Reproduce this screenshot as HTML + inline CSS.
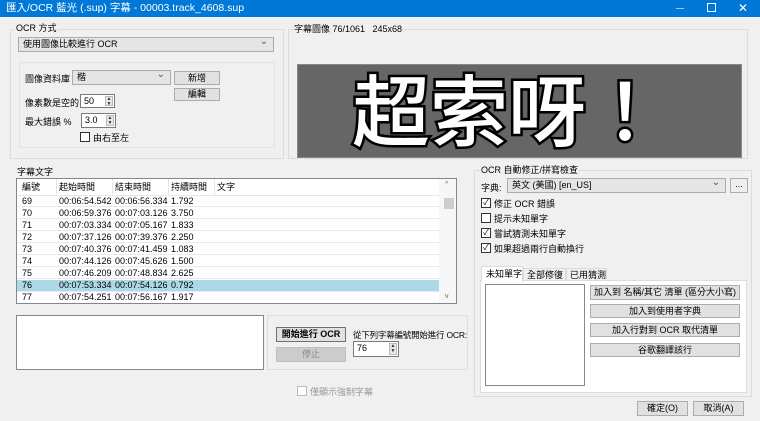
<!DOCTYPE html>
<html><head><meta charset="utf-8"><style>
*{box-sizing:border-box;margin:0;padding:0}
body{width:760px;height:421px;background:#f0f0f0;font-family:"Liberation Sans","Noto Sans CJK TC",sans-serif;font-size:9px;color:#000;position:relative;overflow:hidden}
.a{position:absolute;white-space:nowrap}
.gb{position:absolute;border:1px solid #dcdcdc}
.btn{position:absolute;background:#e1e1e1;border:1px solid #adadad;text-align:center;line-height:13px}
.cb{position:absolute;width:10px;height:10px;border:1px solid #333;background:#fff;font-size:8px;line-height:8px;text-align:center}
.combo{position:absolute;background:#e5e5e5;border:1px solid #acacac;padding-left:4px;line-height:13px}
.combo:after{content:"⌄";position:absolute;right:5px;top:-3px;color:#555;font-size:10px}
.spin{position:absolute;background:#fff;border:1px solid #7a7a7a;padding-left:3px;line-height:12px}
.spin i{position:absolute;right:1px;top:1px;width:8px;bottom:1px;background:#e8e8e8;border:1px solid #bbb;font-style:normal;font-size:5px;line-height:5px;text-align:center;color:#333}
.row{position:absolute;left:17px;width:423px;height:11px;border-bottom:1px solid #e6e9ef;line-height:11px}
.row span{position:absolute}
</style></head><body>
<div class="a" style="left:0;top:0;width:760px;height:17px;background:#0078d7;color:#fff;padding-left:6px;line-height:16px;font-size:10.5px">匯入/OCR 藍光 (.sup) 字幕 - 00003.track_4608.sup</div>
<div class="a" style="left:676px;top:8px;width:8px;height:1px;background:#9cc6ee"></div>
<div class="a" style="left:707px;top:3px;width:9px;height:9px;border:1px solid #fff"></div>
<div class="a" style="left:738px;top:0;color:#fff;font-size:12px;line-height:16px">✕</div>

<div class="gb" style="left:10px;top:29px;width:274px;height:130px"></div>
<div class="a" style="left:15px;top:21px;background:#f0f0f0;padding:0 1px">OCR 方式</div>
<div class="combo" style="left:18px;top:37px;width:256px;height:15px">使用圖像比較進行 OCR</div>
<div class="gb" style="left:19px;top:62px;width:256px;height:86px;border-color:#e2e2e2"></div>
<div class="a" style="left:25px;top:72px">圖像資料庫</div>
<div class="combo" style="left:72px;top:70px;width:99px;height:15px;background:#e5e5e5">楷</div>
<div class="btn" style="left:174px;top:71px;width:46px;height:14px">新增</div>
<div class="btn" style="left:174px;top:88px;width:46px;height:13px;line-height:11px">編輯</div>
<div class="a" style="left:25px;top:96px">像素數是空的</div>
<div class="spin" style="left:80px;top:94px;width:35px;height:14px">50<i>▲<br>▼</i></div>
<div class="a" style="left:25px;top:115px">最大錯誤 %</div>
<div class="spin" style="left:81px;top:113px;width:35px;height:15px">3.0<i>▲<br>▼</i></div>
<div class="cb" style="left:80px;top:132px"></div>
<div class="a" style="left:93px;top:131px">由右至左</div>

<div class="gb" style="left:288px;top:29px;width:460px;height:130px"></div>
<div class="a" style="left:293px;top:22px;background:#f0f0f0;padding:0 1px">字幕圖像 76/1061&nbsp;&nbsp;&nbsp;245x68</div>
<div class="a" style="left:297px;top:64px;width:445px;height:94px;background:#666;border:1px solid #888;overflow:hidden">
<div style="position:absolute;left:54px;top:-8px;font-size:78px;line-height:100px;color:#fff;font-family:'Noto Sans CJK TC',sans-serif;font-weight:500;-webkit-text-stroke:5px #000;paint-order:stroke fill;text-shadow:0 0 3px #000,0 0 3px #000">超索呀！</div></div>

<div class="a" style="left:17px;top:165px">字幕文字</div>
<div class="a" style="left:16px;top:178px;width:441px;height:126px;background:#fff;border:1px solid #828790"></div>
<div class="a" style="left:17px;top:179px;width:424px;height:17px;border-bottom:1px solid #e5e5e5;line-height:16px">
<span class="a" style="left:5px">編號</span><span class="a" style="left:42px">起始時間</span><span class="a" style="left:98px">結束時間</span><span class="a" style="left:154px">持續時間</span><span class="a" style="left:200px">文字</span>
<span class="a" style="left:39px;top:0;width:1px;height:17px;background:#e5e5e5"></span><span class="a" style="left:95px;top:0;width:1px;height:17px;background:#e5e5e5"></span><span class="a" style="left:151px;top:0;width:1px;height:17px;background:#e5e5e5"></span><span class="a" style="left:197px;top:0;width:1px;height:17px;background:#e5e5e5"></span></div>
<div class="row" style="top:196px"><span style="left:5px">69</span><span style="left:42px">00:06:54.542</span><span style="left:98px">00:06:56.334</span><span style="left:154px">1.792</span></div>
<div class="row" style="top:208px"><span style="left:5px">70</span><span style="left:42px">00:06:59.376</span><span style="left:98px">00:07:03.126</span><span style="left:154px">3.750</span></div>
<div class="row" style="top:220px"><span style="left:5px">71</span><span style="left:42px">00:07:03.334</span><span style="left:98px">00:07:05.167</span><span style="left:154px">1.833</span></div>
<div class="row" style="top:232px"><span style="left:5px">72</span><span style="left:42px">00:07:37.126</span><span style="left:98px">00:07:39.376</span><span style="left:154px">2.250</span></div>
<div class="row" style="top:244px"><span style="left:5px">73</span><span style="left:42px">00:07:40.376</span><span style="left:98px">00:07:41.459</span><span style="left:154px">1.083</span></div>
<div class="row" style="top:256px"><span style="left:5px">74</span><span style="left:42px">00:07:44.126</span><span style="left:98px">00:07:45.626</span><span style="left:154px">1.500</span></div>
<div class="row" style="top:268px"><span style="left:5px">75</span><span style="left:42px">00:07:46.209</span><span style="left:98px">00:07:48.834</span><span style="left:154px">2.625</span></div>
<div class="row" style="top:280px;background:#add8e6;height:12px"><span style="left:5px">76</span><span style="left:42px">00:07:53.334</span><span style="left:98px">00:07:54.126</span><span style="left:154px">0.792</span></div>
<div class="row" style="top:292px;border:none"><span style="left:5px">77</span><span style="left:42px">00:07:54.251</span><span style="left:98px">00:07:56.167</span><span style="left:154px">1.917</span></div>
<div class="a" style="left:439px;top:179px;width:17px;height:124px;background:#f7f7f7"></div>
<div class="a" style="left:445px;top:181px;font-size:7px;color:#666">^</div>
<div class="a" style="left:444px;top:198px;width:10px;height:11px;background:#cdcdcd"></div>
<div class="a" style="left:445px;top:293px;font-size:7px;color:#666">v</div>

<div class="a" style="left:16px;top:315px;width:248px;height:55px;background:#fff;border:1px solid #828790"></div>
<div class="gb" style="left:267px;top:315px;width:201px;height:55px;border-color:#dedede"></div>
<div class="btn" style="left:276px;top:327px;width:70px;height:15px;font-weight:bold;border-color:#707070">開始進行 OCR</div>
<div class="btn" style="left:276px;top:347px;width:70px;height:15px;background:#ccc;border-color:#bfbfbf;color:#888">停止</div>
<div class="a" style="left:353px;top:329px;font-size:8.5px;letter-spacing:-0.2px">從下列字幕編號開始進行 OCR:</div>
<div class="spin" style="left:353px;top:341px;width:46px;height:16px">76<i>▲<br>▼</i></div>
<div class="cb" style="left:297px;top:386px;border-color:#bbb"></div>
<div class="a" style="left:310px;top:385px;color:#999">僅顯示強制字幕</div>

<div class="gb" style="left:474px;top:170px;width:278px;height:227px"></div>
<div class="a" style="left:480px;top:163px;background:#f0f0f0;padding:0 1px">OCR 自動修正/拼寫檢查</div>
<div class="a" style="left:481px;top:181px">字典:</div>
<div class="combo" style="left:507px;top:178px;width:219px;height:15px">英文 (美國) [en_US]</div>
<div class="btn" style="left:730px;top:178px;width:18px;height:15px;background:#eee;line-height:10px">...</div>
<div class="cb" style="left:481px;top:198px">✓</div><div class="a" style="left:494px;top:197px">修正 OCR 錯誤</div>
<div class="cb" style="left:481px;top:213px"></div><div class="a" style="left:494px;top:212px">提示未知單字</div>
<div class="cb" style="left:481px;top:228px">✓</div><div class="a" style="left:494px;top:227px">嘗試猜測未知單字</div>
<div class="cb" style="left:481px;top:243px">✓</div><div class="a" style="left:494px;top:242px">如果超過兩行自動換行</div>
<div class="a" style="left:480px;top:280px;width:267px;height:113px;background:#fff;border:1px solid #dcdcdc"></div>
<div class="a" style="left:481px;top:266px;width:42px;height:16px;background:#fff;border:1px solid #dcdcdc;border-bottom:none;padding-left:4px;line-height:14px">未知單字</div>
<div class="a" style="left:523px;top:268px;width:43px;height:13px;border:1px solid #dcdcdc;border-bottom:none;padding-left:3px;line-height:12px">全部修復</div>
<div class="a" style="left:566px;top:268px;width:41px;height:13px;border:1px solid #dcdcdc;border-bottom:none;padding-left:3px;line-height:12px">已用猜測</div>
<div class="a" style="left:485px;top:284px;width:100px;height:102px;background:#fff;border:1px solid #828790"></div>
<div class="btn" style="left:590px;top:285px;width:150px;height:15px">加入到 名稱/其它 清單 (區分大小寫)</div>
<div class="btn" style="left:590px;top:304px;width:150px;height:14px">加入到使用者字典</div>
<div class="btn" style="left:590px;top:323px;width:150px;height:14px">加入行對到 OCR 取代清單</div>
<div class="btn" style="left:590px;top:343px;width:150px;height:14px">谷歌翻譯該行</div>
<div class="btn" style="left:637px;top:401px;width:51px;height:15px">確定(O)</div>
<div class="btn" style="left:693px;top:401px;width:51px;height:15px">取消(A)</div>
</body></html>
